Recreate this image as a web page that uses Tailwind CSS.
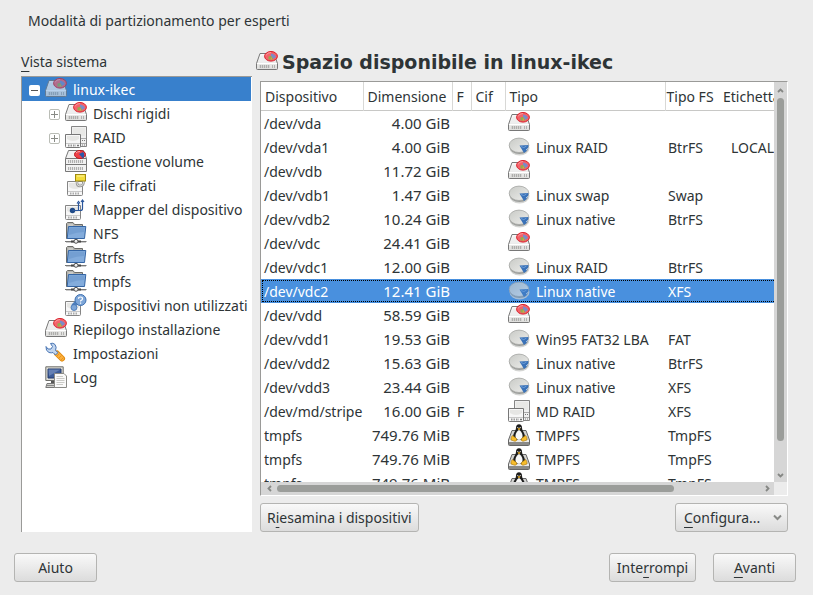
<!DOCTYPE html>
<html lang="it">
<head>
<meta charset="utf-8">
<meta name="viewport" content="width=device-width, initial-scale=1">
<title>Modalità di partizionamento per esperti</title>
<script src="https://cdn.jsdelivr.net/npm/@tailwindcss/browser@4"></script>
</head>
<body class="flex h-screen flex-col overflow-hidden bg-[#ececec] font-['Noto_Sans',sans-serif] text-sm text-[#2e3436]">

<!-- Icon set -->
<svg class="absolute size-0" aria-hidden="true">
  <defs>
    <linearGradient id="metal" x1="0" y1="0" x2="0" y2="1"><stop offset="0" stop-color="#fcfcfc"/><stop offset="1" stop-color="#dededc"/></linearGradient>
    <linearGradient id="disc" x1="0" y1="0" x2="1" y2="1"><stop offset="0" stop-color="#c8cac6"/><stop offset="1" stop-color="#eeeeec"/></linearGradient>
  </defs>
  <symbol id="drive" viewBox="0 0 22 22">
    <path d="M4 2.500H18L21.500 12.500V17.500Q21.500 18.500 20.500 18.500H1.500Q.5 18.500 .5 17.500V12.500Z" fill="url(#metal)" stroke="#777"/>
    <path d="M5 4.500H17L19.500 11.500H2.500Z" fill="#eee"/>
    <path d="M1 12.500H21" stroke="#fff"/>
    <path d="M3 15.500H14" stroke="#d4d4d2" stroke-width="3"/>
    <path d="M4.500 14V17M6.500 14V17M8.500 14V17M10.500 14V17M12.500 14V17M16.500 14V17M18.500 14V17" stroke="#a4a4a2" stroke-width=".8"/>
    <ellipse cx="15" cy="5.300" rx="6.400" ry="4.800" fill="#f4626a" stroke="#d81e28"/>
    <path d="M10 4.500Q11 1.500 15 1.500" fill="none" stroke="#f99a9e"/>
    <path d="M15 5V2.500Q19 3 20 6L17 8Z" fill="#7a8cc8"/>
    <path d="M15 5L17.500 8.500H12.500V5.500Z" fill="#8fae4e"/>
    <path d="M15 5.500L16.500 8.500H14.500Z" fill="#d9a14a"/>
  </symbol>
  <symbol id="part" viewBox="0 0 22 22">
    <ellipse cx="11.500" cy="12" rx="10" ry="7.500" fill="#d4d5d3"/>
    <path d="M1.500 9V11Q3 18 11.500 18T20.500 11V9Z" fill="#9c9e9b"/>
    <ellipse cx="11" cy="9.300" rx="9.800" ry="7.200" fill="url(#disc)" stroke="#a4a6a3" stroke-width=".8"/>
    <path d="M11.500 9.500L20.500 9Q20.500 14 16 17Z" fill="#3a72b8"/>
    <path d="M13 10.500Q16 13 18.500 10" fill="none" stroke="#6d9cd6"/>
    <path d="M18 14L20.500 12" stroke="#d8e4f4" stroke-width=".8"/>
  </symbol>
  <symbol id="raid" viewBox="0 0 22 22">
    <path d="M6.500 .5H21.500V20.500H6.500Z" fill="#f0f0f0" stroke="#858585"/>
    <path d="M8 2H20V10H8Z" fill="#e8e8e6"/>
    <path d="M15 12.500H21M15 17.500H21" stroke="#aaa"/>
    <path d="M17 14.500H18M19 14.500H20M17 19H18M19 19H20" stroke="#777"/>
    <path d="M.5 8.500H15.500V20.500Q15.500 21.500 14.500 21.500H1.500Q.5 21.500 .5 20.500Z" fill="#f7f7f7" stroke="#777"/>
    <path d="M2 10H14V13Q8 17 2 13Z" fill="#e6e6e4"/>
    <path d="M1 17.500H15" stroke="#c8c8c8"/>
    <path d="M3 19.500H11" stroke="#999" stroke-width="2" stroke-dasharray="1.500 1"/>
    <path d="M12 19.500H14" stroke="#777" stroke-width="1.500"/>
  </symbol>
  <symbol id="lvm" viewBox="0 0 22 22">
    <path d="M3.500 .5H18.500L21.500 8.500V21.500H.5V8.500Z" fill="#f2f2f2" stroke="#777"/>
    <path d="M.5 8.500H21.500M.5 14.500H21.500" stroke="#777"/>
    <path d="M3 11.500H18M3 18.500H18" stroke="#b0b0b0" stroke-width="3" stroke-dasharray="1.200 .8"/>
    <ellipse cx="15" cy="4.500" rx="5.500" ry="4" fill="#ef4048" stroke="#c01820"/>
    <path d="M14 4L18 2Q20.500 4.500 18 8.500Z" fill="#2c58a8"/>
    <path d="M11 3Q12 1.500 15 1.500" fill="none" stroke="#f9a0a4"/>
  </symbol>
  <symbol id="small-drive" viewBox="0 0 22 22">
    <path d="M.5 7.500H15.500V20.500Q15.500 21.500 14.500 21.500H1.500Q.5 21.500 .5 20.500Z" fill="#f7f7f7" stroke="#858585"/>
    <path d="M2 9H14V13Q8 17 2 13Z" fill="#e6e6e4"/>
    <path d="M1 17.500H15" stroke="#c8c8c8"/>
    <path d="M3 19.500H12" stroke="#aaa" stroke-width="2" stroke-dasharray="1.500 1"/>
  </symbol>
  <symbol id="crypt" viewBox="0 0 22 22">
    <use href="#small-drive" x="2" width="22" height="22"/>
    <path d="M12 7V9Q12 12 15 12T18.500 9V7" fill="none" stroke="#9a9a98" stroke-width="2.500"/>
    <path d="M12 7V9Q12 12 15 12T18.500 9V7" fill="none" stroke="#d8d8d6"/>
    <rect x="10.500" y=".5" width="10" height="6.500" fill="#f3dc3c" stroke="#a08b10"/>
    <path d="M12 2H19" stroke="#fdf5a0"/>
  </symbol>
  <symbol id="mapper" viewBox="0 0 22 22">
    <use href="#small-drive" width="22" height="22"/>
    <circle cx="7.500" cy="12.500" r="2.700" fill="#204a87"/>
    <path d="M7.500 12.500H15.500Q17.500 12.500 17.500 10.500V3M13.500 12V5M12 5.500L13.500 3.500L15 5.500M16 4L17.500 2L19 4" fill="none" stroke="#2a569c" stroke-width="1.200"/>
  </symbol>
  <symbol id="net" viewBox="0 0 22 22">
    <path d="M1.500 16.500V1.500L2.500 .5H8L9.500 2.500H17.500V16.500Z" fill="#b4b4b0" stroke="#6c6c68"/>
    <path d="M3.500 3H8M3.500 5H16" stroke="#e0e0dc"/>
    <path d="M3.500 4.500H20.800L19.500 16.500H2.200Z" fill="#83acdc" stroke="#3465a4"/>
    <path d="M4.500 5.500H19.500L19 10Q12 10 4 13Z" fill="#749fd2"/>
    <path d="M0 19.500H21.500" stroke="#777"/>
    <path d="M1 20.500H21" stroke="#ccc"/>
    <path d="M6 19.500H16" stroke="#444" stroke-width="2"/>
    <circle cx="11" cy="19.300" r="2" fill="#eee" stroke="#555"/>
  </symbol>
  <symbol id="unused" viewBox="0 0 22 22">
    <use href="#small-drive" width="22" height="22"/>
    <path d="M12 8L8 12" stroke="#4f80be" stroke-width="4"/>
    <circle cx="9" cy="13.500" r="3" fill="#7ea6d8" stroke="#3f70b0" stroke-width=".8"/>
    <circle cx="15.500" cy="6" r="5.500" fill="#7ea6d8" stroke="#3f70b0"/>
    <path d="M13.500 4.800Q13.500 3 15.500 3T17.500 4.800Q17.500 6 15.600 6.800V7.500M15.600 8.500V9.700" fill="none" stroke="#fff" stroke-width="1.200"/>
  </symbol>
  <symbol id="wrench" viewBox="0 0 22 22">
    <path d="M12 11.500L17 16.500" stroke="#e08a10" stroke-width="6" stroke-linecap="round"/>
    <path d="M12 11.500L17 16.500" stroke="#fbb03c" stroke-width="4" stroke-linecap="round"/>
    <path d="M12 14L14.500 11.500M14 16L16.500 13.500M16 18L18.500 15.500" stroke="#e8901c" stroke-width=".9"/>
    <path d="M5.500 1.500L7.500 4.500L6 7L3 7L1 4.500Q.5 9 4 10.500Q6.500 11.200 8 10.500L10.500 13L13 10.500L10.500 8.500Q12 5 10 2.500Q8 .5 5.500 1.500Z" fill="#c2d5ee" stroke="#4a76b4"/>
  </symbol>
  <symbol id="log" viewBox="0 0 22 22">
    <path d="M.8 .8H18.200V14.500H.8Z" fill="#deded8" stroke="#6e6e6a"/>
    <path d="M3 3H16V12H3Z" fill="#3d5c98" stroke="#22386a"/>
    <path d="M3.500 3.500H15.500L4 10Z" fill="#6580b4"/>
    <path d="M6 15H12V17H6Z" fill="#555"/>
    <path d="M2 17.500H14L15 21.500H.8Z" fill="#d0d0cc" stroke="#777"/>
    <path d="M2 19.500H12" stroke="#888"/>
    <path d="M9.500 7.500H19L21.500 10V21.500H9.500Z" fill="#fafafa" stroke="#8a8a86"/>
    <path d="M11.500 10.500H18M11.500 12.500H19.500M11.500 14.500H19.500M11.500 16.500H19.500M11.500 18.500H18" stroke="#c4c4c0" stroke-width=".9"/>
  </symbol>
  <symbol id="tux" viewBox="0 0 22 22">
    <path d="M4 6.500H18L21.500 16V20.500Q21.500 21.500 20.500 21.500H1.500Q.5 21.500 .5 20.500V16Z" fill="#d4d4d2" stroke="#666"/>
    <path d="M1 17H21" stroke="#fff"/>
    <path d="M1 19.500H21" stroke="#8a8a88" stroke-width="3"/>
    <path d="M11 .3Q14 .3 14 4Q14 6 16 9Q18 13 16 16H6Q4 13 6 9Q8 6 8 4Q8 .3 11 .3Z" fill="#1c1c1c"/>
    <path d="M11 6Q13.500 7 14.500 11Q15 15.500 11 16Q7 15.500 7.500 11Q8.500 7 11 6Z" fill="#f8f8f8"/>
    <path d="M9.500 4.800L11 4L12.600 4.800L11 6.300Z" fill="#f0b428"/>
    <path d="M9.800 3V4M12.200 3V4" stroke="#fff" stroke-width=".9"/>
    <path d="M4.500 11.500L8.500 14.500Q9.500 17 7 17.300L3 16Q2.500 13 4.500 11.500Z" fill="#f7bd2c" stroke="#a87408" stroke-width=".6"/>
    <path d="M17.500 11.500L13.500 14.500Q12.500 17 15 17.300L19 16Q19.500 13 17.500 11.500Z" fill="#f7bd2c" stroke="#a87408" stroke-width=".6"/>
  </symbol>
</svg>

<p class="px-7 pt-[11px] leading-5">Modalità di partizionamento per esperti</p>

<main class="flex min-h-0 flex-1 gap-2 pt-[21px] pr-[25px] pl-[21px]">

  <!-- System tree -->
  <section class="flex w-[231px] shrink-0 flex-col">
    <h2 id="tree-label" class="mb-1 leading-5"><u class="underline-offset-[4px]">V</u>ista sistema</h2>
    <ul role="tree" aria-labelledby="tree-label" class="flex-1 overflow-hidden border-t border-l border-[#9a9a98] bg-white whitespace-nowrap [&_svg]:mb-0.5 [&_svg]:size-[22px] [&_svg]:shrink-0">
      <li role="treeitem" aria-expanded="true">
        <div class="mr-px flex h-6 items-center bg-[#3880cc] pt-0.5 pl-[7px] text-white">
          <button aria-label="Comprimi" class="mr-[5px] flex size-[11px] items-center justify-center rounded-xs bg-white"><span class="h-px w-[7px] bg-[#555]"></span></button>
          <svg class="mr-[6px] opacity-65"><use href="#drive"/></svg>linux-ikec
        </div>
        <ul role="group" class="[&>li]:flex [&>li]:h-6 [&>li]:items-center [&>li]:gap-[6px] [&>li]:pt-0.5 [&>li]:pl-[43px]">
          <li role="treeitem" class="relative"><button aria-label="Espandi" class="absolute left-[27px] flex size-[11px] items-center justify-center rounded-xs border border-[#babdb6] bg-white"><span class="absolute h-px w-[7px] bg-[#888a85]"></span><span class="absolute h-[7px] w-px bg-[#888a85]"></span></button><svg><use href="#drive"/></svg>Dischi rigidi</li>
          <li role="treeitem" class="relative"><button aria-label="Espandi" class="absolute left-[27px] flex size-[11px] items-center justify-center rounded-xs border border-[#babdb6] bg-white"><span class="absolute h-px w-[7px] bg-[#888a85]"></span><span class="absolute h-[7px] w-px bg-[#888a85]"></span></button><svg><use href="#raid"/></svg>RAID</li>
          <li role="treeitem"><svg><use href="#lvm"/></svg>Gestione volume</li>
          <li role="treeitem"><svg><use href="#crypt"/></svg>File cifrati</li>
          <li role="treeitem"><svg><use href="#mapper"/></svg>Mapper del dispositivo</li>
          <li role="treeitem"><svg><use href="#net"/></svg>NFS</li>
          <li role="treeitem"><svg><use href="#net"/></svg>Btrfs</li>
          <li role="treeitem"><svg><use href="#net"/></svg>tmpfs</li>
          <li role="treeitem"><svg><use href="#unused"/></svg>Dispositivi non utilizzati</li>
        </ul>
      </li>
      <li role="treeitem" class="flex h-6 items-center gap-[6px] pt-0.5 pl-[23px]"><svg><use href="#drive"/></svg>Riepilogo installazione</li>
      <li role="treeitem" class="flex h-6 items-center gap-[6px] pt-0.5 pl-[23px]"><svg><use href="#wrench"/></svg>Impostazioni</li>
      <li role="treeitem" class="flex h-6 items-center gap-[6px] pt-0.5 pl-[23px]"><svg><use href="#log"/></svg>Log</li>
    </ul>
  </section>

  <!-- Device list -->
  <section class="flex min-w-0 flex-1 flex-col">
    <h1 class="-mt-1 mb-[5px] flex h-7 items-center gap-1 font-[family-name:'DejaVu_Sans',Verdana,sans-serif] text-[19px] leading-6 font-bold whitespace-nowrap"><svg class="-ml-1 size-[22px]"><use href="#drive"/></svg><span class="font-[family-name:'DejaVu_Sans',Verdana,sans-serif]">Spazio disponibile in linux-ikec</span></h1>

    <div class="grid min-h-0 flex-1 grid-cols-[minmax(0,1fr)_13px] grid-rows-[minmax(0,1fr)_13px] border border-t-[#9a9a98] border-r-white border-b-white border-l-[#9a9a98]">
      <div class="overflow-hidden bg-white">
        <table class="w-[560px] table-fixed border-collapse text-left whitespace-nowrap [&_svg]:mb-0.5 [&_svg]:size-[22px] [&_td]:h-6 [&_td]:pt-0.5 [&_td]:pb-0 [&_td]:pl-[3px] [&_td:nth-child(2)]:pt-0 [&_td:nth-child(2)]:pr-[2px] [&_td:nth-child(2)]:text-right [&_td:nth-child(2)]:text-[15px] [&_td:nth-child(2)]:leading-5 [&_td:nth-child(3)]:pl-[5px] [&_td:nth-child(7)]:pl-3 [&_td>div]:flex [&_td>div]:h-[22px] [&_td>div]:items-center [&_td>div]:gap-[6px]">
          <colgroup>
            <col class="w-[102px]"><col class="w-[89px]"><col class="w-[19px]"><col class="w-[34px]"><col class="w-[160px]"><col class="w-[54px]"><col>
          </colgroup>
          <thead>
            <tr class="h-7 border-b border-[#c8c8c6] [&>th]:border-r [&>th]:border-[#d8d8d6] [&>th]:p-0 [&>th]:pt-[3px] [&>th]:pl-1 [&>th]:font-normal">
              <th scope="col">Dispositivo</th><th scope="col">Dimensione</th><th scope="col">F</th><th scope="col">Cif</th><th scope="col">Tipo</th><th scope="col" class="border-r-0! pl-px!">Tipo FS</th><th scope="col">Etichetta</th>
            </tr>
          </thead>
          <tbody>
            <tr><td>/dev/vda</td><td>4.00 GiB</td><td></td><td></td><td><div><svg><use href="#drive"/></svg></div></td><td></td><td></td></tr>
            <tr><td>/dev/vda1</td><td>4.00 GiB</td><td></td><td></td><td><div><svg><use href="#part"/></svg>Linux RAID</div></td><td>BtrFS</td><td>LOCAL</td></tr>
            <tr><td>/dev/vdb</td><td>11.72 GiB</td><td></td><td></td><td><div><svg><use href="#drive"/></svg></div></td><td></td><td></td></tr>
            <tr><td>/dev/vdb1</td><td>1.47 GiB</td><td></td><td></td><td><div><svg><use href="#part"/></svg>Linux swap</div></td><td>Swap</td><td></td></tr>
            <tr><td>/dev/vdb2</td><td>10.24 GiB</td><td></td><td></td><td><div><svg><use href="#part"/></svg>Linux native</div></td><td>BtrFS</td><td></td></tr>
            <tr><td>/dev/vdc</td><td>24.41 GiB</td><td></td><td></td><td><div><svg><use href="#drive"/></svg></div></td><td></td><td></td></tr>
            <tr><td>/dev/vdc1</td><td>12.00 GiB</td><td></td><td></td><td><div><svg><use href="#part"/></svg>Linux RAID</div></td><td>BtrFS</td><td></td></tr>
            <tr aria-selected="true" class="bg-[#4990de] text-white outline-1 -outline-offset-2 outline-dotted outline-black"><td>/dev/vdc2</td><td>12.41 GiB</td><td></td><td></td><td><div><svg class="opacity-65"><use href="#part"/></svg>Linux native</div></td><td>XFS</td><td></td></tr>
            <tr><td>/dev/vdd</td><td>58.59 GiB</td><td></td><td></td><td><div><svg><use href="#drive"/></svg></div></td><td></td><td></td></tr>
            <tr><td>/dev/vdd1</td><td>19.53 GiB</td><td></td><td></td><td><div><svg><use href="#part"/></svg>Win95 FAT32 LBA</div></td><td>FAT</td><td></td></tr>
            <tr><td>/dev/vdd2</td><td>15.63 GiB</td><td></td><td></td><td><div><svg><use href="#part"/></svg>Linux native</div></td><td>BtrFS</td><td></td></tr>
            <tr><td>/dev/vdd3</td><td>23.44 GiB</td><td></td><td></td><td><div><svg><use href="#part"/></svg>Linux native</div></td><td>XFS</td><td></td></tr>
            <tr><td>/dev/md/stripe</td><td>16.00 GiB</td><td>F</td><td></td><td><div><svg><use href="#raid"/></svg>MD RAID</div></td><td>XFS</td><td></td></tr>
            <tr><td>tmpfs</td><td>749.76 MiB</td><td></td><td></td><td><div><svg><use href="#tux"/></svg>TMPFS</div></td><td>TmpFS</td><td></td></tr>
            <tr><td>tmpfs</td><td>749.76 MiB</td><td></td><td></td><td><div><svg><use href="#tux"/></svg>TMPFS</div></td><td>TmpFS</td><td></td></tr>
            <tr><td>tmpfs</td><td>749.76 MiB</td><td></td><td></td><td><div><svg><use href="#tux"/></svg>TMPFS</div></td><td>TmpFS</td><td></td></tr>
          </tbody>
        </table>
      </div>
      <div class="flex flex-col items-center bg-[#d6d6d6]">
        <button aria-label="Scorri su" class="flex h-4 items-center"><svg class="size-[7px]" viewBox="0 0 7 7"><path d="M1 5L3.500 2.500L6 5" fill="none" stroke="#858784" stroke-width="1.800"/></svg></button>
        <div class="mb-[28px] w-[7px] flex-1 rounded-full bg-[#9b9d9a]"></div>
        <button aria-label="Scorri giù" class="flex h-[13px] items-center"><svg class="size-[7px]" viewBox="0 0 7 7"><path d="M1 2L3.500 4.500L6 2" fill="none" stroke="#858784" stroke-width="1.800"/></svg></button>
      </div>
      <div class="flex items-center bg-[#d6d6d6]">
        <button aria-label="Scorri a sinistra" class="flex w-4 justify-center"><svg class="size-[7px]" viewBox="0 0 7 7"><path d="M5 1L2.500 3.500L5 6" fill="none" stroke="#858784" stroke-width="1.800"/></svg></button>
        <div class="mr-[87px] h-[7px] flex-1 rounded-full bg-[#9b9d9a]"></div>
        <button aria-label="Scorri a destra" class="flex w-[13px] justify-center"><svg class="size-[7px]" viewBox="0 0 7 7"><path d="M2 1L4.500 3.500L2 6" fill="none" stroke="#858784" stroke-width="1.800"/></svg></button>
      </div>
      <div class="bg-[#ececec]"></div>
    </div>

    <div class="mt-[7px] flex justify-between">
      <button class="h-[29px] rounded-[3px] border border-[#b4b4b2] bg-linear-to-b from-[#f9f9f9] to-[#dcdcdc] px-[6px]">R<u class="underline-offset-[4px]">i</u>esamina i dispositivi</button>
      <button aria-haspopup="menu" class="flex h-[29px] w-[113px] items-center justify-between rounded-[3px] border border-[#b4b4b2] bg-linear-to-b from-[#f9f9f9] to-[#dcdcdc] pr-[5px] pl-2"><span><u class="underline-offset-[4px]">C</u>onfigura...</span><svg class="size-[9px]" viewBox="0 0 9 9"><path d="M1 2.500L4.500 6L8 2.500" fill="none" stroke="#888a87" stroke-width="2"/></svg></button>
    </div>
  </section>
</main>

<footer class="flex gap-[17px] pt-[21px] pr-[17px] pb-[13px] pl-[14px]">
  <button class="mr-auto h-[29px] w-[83px] rounded-[3px] border border-[#b4b4b2] bg-linear-to-b from-[#f9f9f9] to-[#dcdcdc]">Aiuto</button>
  <button class="h-[29px] w-[87px] rounded-[3px] border border-[#b4b4b2] bg-linear-to-b from-[#f9f9f9] to-[#dcdcdc]">Inte<u class="underline-offset-[4px]">r</u>rompi</button>
  <button class="h-[29px] w-[83px] rounded-[3px] border border-[#b4b4b2] bg-linear-to-b from-[#f9f9f9] to-[#dcdcdc]"><u class="underline-offset-[4px]">A</u>vanti</button>
</footer>
</body>
</html>
